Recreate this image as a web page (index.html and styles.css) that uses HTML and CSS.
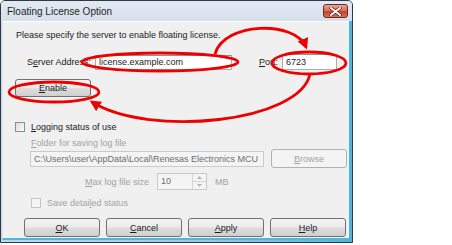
FILE: index.html
```html
<!DOCTYPE html>
<html lang="en">
<head>
    <meta charset="UTF-8">
    <title>Floating License Option</title>
    <link rel="stylesheet" href="styles.css">
</head>
<body>
    <div class="window">
        <div class="titlebar">
            <span class="title">Floating License Option</span>
            <span class="close">
                <svg width="13" height="9" viewBox="0 0 13 9">
                    <path d="M2 1 L11 8 M11 1 L2 8" stroke="#5a1d14" stroke-width="3.4" stroke-linecap="round"/>
                    <path d="M2 1 L11 8 M11 1 L2 8" stroke="#ffffff" stroke-width="2" stroke-linecap="round"/>
                </svg>
            </span>
        </div>
        <div class="content">
            <div class="intro">Please specify the server to enable floating license.</div>
            <div class="server-row">
                <span class="server-label">S<u>e</u>rver Address:</span>
                <span class="field server-field">license.example.com</span>
                <span class="port-label"><u>P</u>ort:</span>
                <span class="field port-field">6723</span>
            </div>
            <div class="btn enable-btn"><u>E</u>nable</div>
            <div class="check-row log-row">
                <span class="check"></span>
                <span><u>L</u>ogging status of use</span>
            </div>
            <div class="folder-label disabled"><u>F</u>older for saving log file</div>
            <div class="path-row">
                <span class="field off path-field">C:\Users\user\AppData\Local\Renesas Electronics MCU</span>
                <div class="btn off browse-btn"><u>B</u>rowse</div>
            </div>
            <div class="max-row disabled">
                <span class="max-label"><u>M</u>ax log file size</span>
                <span class="field off spin-field">
                    <span class="spin-value">10</span>
                    <span class="spin">
                        <span class="spin-up"><svg width="5" height="3" viewBox="0 0 5 3"><path d="M0 3 L2.5 0 L5 3 Z" fill="#b5b5b5"/></svg></span>
                        <span class="spin-down"><svg width="5" height="3" viewBox="0 0 5 3"><path d="M0 0 L2.5 3 L5 0 Z" fill="#b5b5b5"/></svg></span>
                    </span>
                </span>
                <span class="mb">MB</span>
            </div>
            <div class="check-row save-row disabled">
                <span class="check off"></span>
                <span>Save detai<u>l</u>ed status</span>
            </div>
            <div class="buttons">
                <div class="btn"><u>O</u>K</div>
                <div class="btn"><u>C</u>ancel</div>
                <div class="btn"><u>A</u>pply</div>
                <div class="btn"><u>H</u>elp</div>
            </div>
        </div>
    </div>

    <svg class="marks" width="452" height="245" viewBox="0 0 452 245">
        <defs>
            <marker id="head" markerWidth="4" markerHeight="4" refX="3" refY="2" orient="auto" markerUnits="strokeWidth">
                <path d="M0 0 L4 2 L0 4 Z" fill="#ee0000"/>
            </marker>
        </defs>
        <ellipse cx="160" cy="62" rx="78" ry="9" fill="none" stroke="#ee0000" stroke-width="2.8"/>
        <ellipse cx="309" cy="63" rx="37" ry="11" fill="none" stroke="#ee0000" stroke-width="2.8"/>
        <ellipse cx="54" cy="92" rx="45" ry="10" fill="none" stroke="#ee0000" stroke-width="2.8"/>
        <path d="M215 54 C 224 22, 295 20, 306 47" fill="none" stroke="#ee0000" stroke-width="2.8" marker-end="url(#head)"/>
        <path d="M310 74 C 300 122, 150 138, 92 102" fill="none" stroke="#ee0000" stroke-width="2.8" marker-end="url(#head)"/>
    </svg>
</body>
</html>
```

FILE: styles.css
```css
body {
    margin: 0;
    width: 452px;
    height: 245px;
    background-color: #ffffff;
    font-family: "Liberation Sans", Arial, sans-serif;
    font-size: 9px;
    color: #1a1a1a;
    position: relative;
    overflow: hidden;
}
u {
    text-decoration: underline;
    text-underline-offset: 1px;
}
.window {
    width: 353px;
    height: 243px;
    box-sizing: border-box;
    border: 1px solid #2e3a46;
    border-radius: 5px 5px 0 0;
    background: linear-gradient(90deg, #c4d7ea, #9fc6e2 60%, #4eb3dc);
    overflow: hidden;
}
.titlebar {
    height: 20px;
    display: flex;
    align-items: center;
    justify-content: space-between;
    padding: 0 4px 0 6px;
    background: linear-gradient(#e2e9f2, #d6e0eb);
}
.title {
    font-size: 10px;
    color: #1e1e1e;
}
.close {
    width: 25px;
    height: 14px;
    box-sizing: border-box;
    border: 1px solid #6b2a20;
    border-radius: 3px;
    background: linear-gradient(#eba797, #d86b56 50%, #c4412b 55%, #d9745a);
    display: flex;
    align-items: center;
    justify-content: center;
}
.content {
    margin-left: 1px;
    width: 347px;
    height: 219px;
    box-sizing: border-box;
    background-color: #f0f0f0;
    border-top: 1px solid #ffffff;
    border-left: 1px solid #e6e6e6;
    border-bottom: 2px solid #4fb6de;
}
.disabled {
    color: #a3a3a3;
}
.intro {
    margin: 6px 0 0 13px;
    line-height: 14px;
}
.server-row {
    display: flex;
    align-items: center;
    margin-top: 12px;
    height: 16px;
}
.server-label {
    margin-left: 24px;
    width: 68px;
}
.field {
    height: 15px;
    box-sizing: border-box;
    border: 1px solid #abadb3;
    border-top-color: #8e9198;
    background-color: #ffffff;
    padding-left: 3px;
    line-height: 13px;
    white-space: nowrap;
    overflow: hidden;
}
.field.off {
    background-color: #f4f4f4;
    border-color: #c9cacc;
    color: #6d6d6d;
}
.server-field {
    width: 137px;
}
.port-label {
    margin-left: 27px;
    width: 23px;
}
.port-field {
    width: 55px;
    height: 16px;
    line-height: 14px;
}
.btn {
    width: 76px;
    height: 19px;
    box-sizing: border-box;
    border: 1px solid #707070;
    border-radius: 3px;
    background: linear-gradient(#f3f3f3, #ebebeb 48%, #dddddd 52%, #cfcfcf);
    display: flex;
    align-items: center;
    justify-content: center;
    color: #1a1a1a;
}
.btn.off {
    border-color: #adb2b5;
    background: #f4f4f4;
    color: #a3a3a3;
}
.enable-btn {
    margin: 9px 0 0 12px;
    height: 18px;
}
.check-row {
    display: flex;
    align-items: center;
    height: 11px;
}
.check {
    width: 10px;
    height: 10px;
    box-sizing: border-box;
    border: 1px solid #8e8f8f;
    background: linear-gradient(135deg, #dcdcdc, #fbfbfb);
    margin-right: 6px;
}
.check.off {
    border-color: #c5c5c5;
    background: #f4f4f4;
}
.log-row {
    margin: 24px 0 0 12px;
}
.folder-label {
    margin: 5px 0 0 28px;
    line-height: 12px;
}
.path-row {
    display: flex;
    align-items: center;
    height: 19px;
}
.path-field {
    margin-left: 27px;
    width: 234px;
    height: 16px;
    line-height: 14px;
}
.browse-btn {
    margin-left: 7px;
}
.max-row {
    display: flex;
    align-items: center;
    margin-top: 5px;
    height: 17px;
}
.max-label {
    margin-left: 82px;
    width: 72px;
}
.spin-field {
    width: 50px;
    height: 17px;
    display: flex;
    padding-left: 0;
}
.spin-value {
    flex: 1;
    padding-left: 3px;
    line-height: 15px;
}
.spin {
    width: 13px;
    display: flex;
    flex-direction: column;
    border-left: 1px solid #d6d6d6;
}
.spin-up, .spin-down {
    flex: 1;
    display: flex;
    align-items: center;
    justify-content: center;
}
.spin-up {
    border-bottom: 1px solid #d6d6d6;
}
.mb {
    margin-left: 8px;
}
.save-row {
    margin: 8px 0 0 28px;
    height: 10px;
}
.buttons {
    display: flex;
    gap: 6px;
    margin: 10px 0 0 21px;
}
.marks {
    position: absolute;
    top: 0;
    left: 0;
    pointer-events: none;
}
```
